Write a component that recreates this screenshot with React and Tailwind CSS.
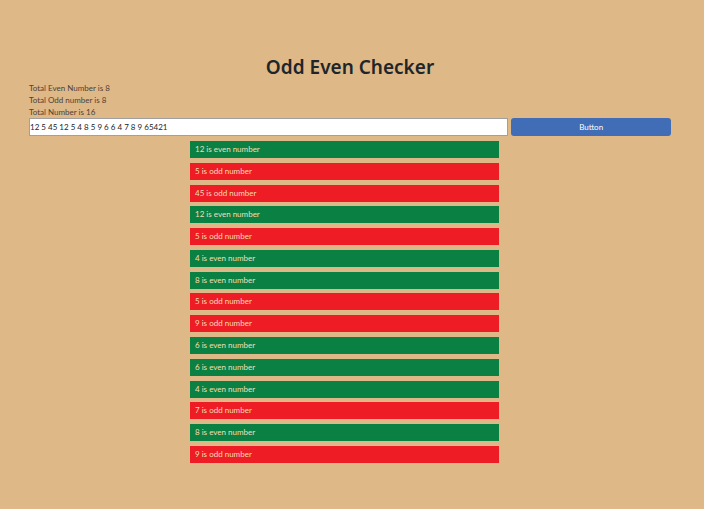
const input = '12 5 45 12 5 4 8 5 9 6 6 4 7 8 9 65421';
const shown = [12, 5, 45, 12, 5, 4, 8, 5, 9, 6, 6, 4, 7, 8, 9];

export default function App() {
  return (
    <main className="min-h-screen bg-[#deb887] pt-[52px] pr-[33px] pb-8 pl-[29px] font-['Lato','Noto_Sans',sans-serif] text-[8px] leading-3 text-[#4b4238]">
      <h1 className="text-center font-['Noto_Sans',sans-serif] text-[19px] leading-[30px] font-semibold text-[#212529]">Odd Even Checker</h1>
      <p>Total Even Number is 8</p>
      <p>Total Odd number is 8</p>
      <p>Total Number is 16</p>
      <div className="grid grid-cols-[3fr_1fr] gap-[3px]">
        <input
          aria-label="Numbers"
          defaultValue={input}
          className="h-[18px] min-w-0 border border-[#a0a0a0] bg-white text-[#212529]"
        />
        <button className="h-[18px] rounded-[3px] bg-[#406db5] text-white">Button</button>
      </div>
      <div className="flex justify-center pt-[5px] pr-[11px]">
        <ul className="flex h-[322px] w-[309px] flex-col justify-between text-[#f5deb3]">
          {shown.map((n, i) => (
            <li
              key={i}
              className={n % 2 ? 'bg-[#ee1c25] px-[5px] leading-[17px]' : 'bg-[#0b8043] px-[5px] leading-[17px]'}
            >
              {n} is {n % 2 ? 'odd' : 'even'} number
            </li>
          ))}
        </ul>
      </div>
    </main>
  );
}
